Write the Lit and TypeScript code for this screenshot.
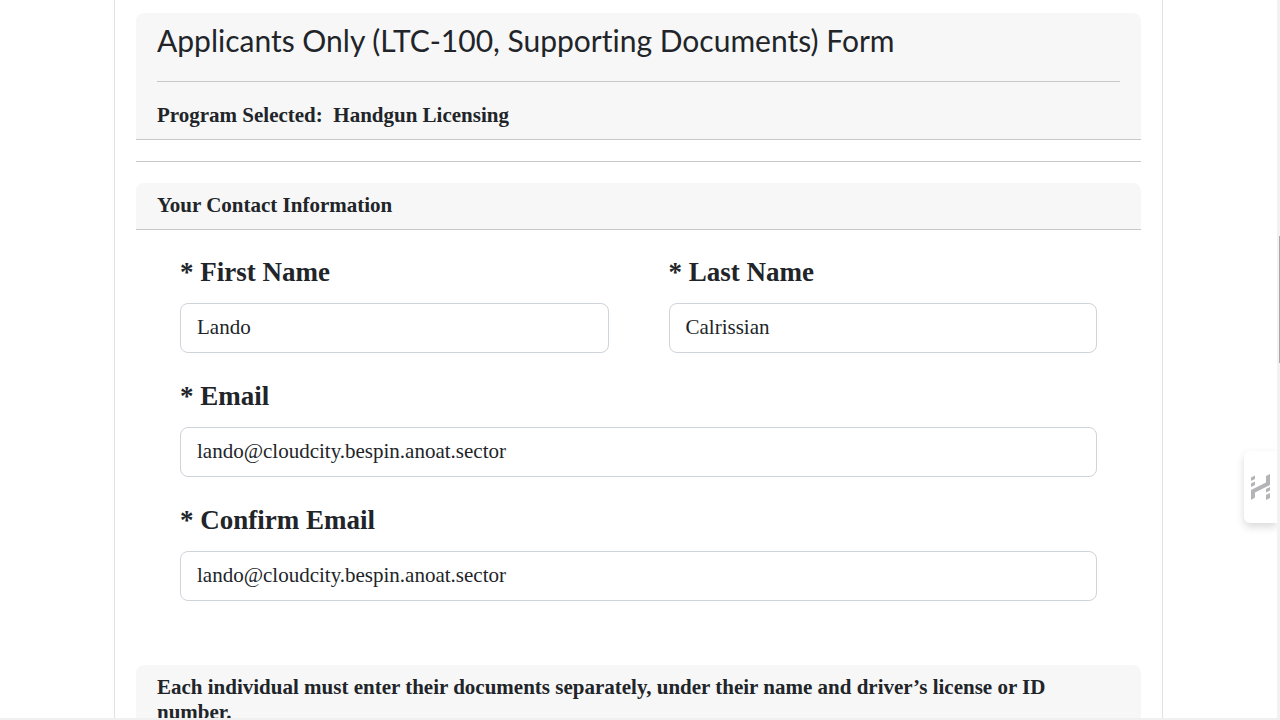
import { LitElement, html, css } from "lit";
import { customElement, property } from "lit/decorators.js";

@customElement("text-field")
class TextField extends LitElement {
  @property() label = "";
  @property() name = "";
  @property() type = "text";
  @property() value = "";

  static styles = css`
    :host {
      display: block;
      min-width: 0;
    }
    .label {
      display: block;
      margin-bottom: 14px;
      font-size: 27px;
      font-weight: 700;
      line-height: 34px;
    }
    .input {
      display: block;
      box-sizing: border-box;
      width: 100%;
      height: 50px;
      padding: 0 16px 2px;
      border: 1px solid #ced4da;
      border-radius: 8px;
      background: #fff;
      color: #212529;
      font: inherit;
      outline: none;
    }
    .input:focus-visible {
      border-color: #86b7fe;
    }
  `;

  render() {
    return html`
      <label class="label" for="control">* ${this.label}</label>
      <input class="input" id="control" name=${this.name} type=${this.type} .value=${this.value} required />
    `;
  }
}

@customElement("app-root")
class AppRoot extends LitElement {
  static styles = css`
    :host {
      display: grid;
      grid-template-columns: minmax(0, 1fr) 3px;
      grid-template-rows: minmax(0, 1fr) 2px;
      height: 100vh;
      overflow: hidden;
      background: #fff;
      color: #212529;
      font-family: "Liberation Serif", "Times New Roman", serif;
      font-size: 21px;
      line-height: 25px;
    }
    .viewport {
      position: relative;
      overflow: hidden;
    }
    .page {
      box-sizing: border-box;
      max-width: 1049px;
      min-height: 100%;
      margin: 0 auto;
      padding: 13px 21px 0;
      border: 1px solid #dee2e6;
      border-width: 0 1px;
    }
    .band {
      padding: 10px 21px 11px;
      border-bottom: 1px solid #c8c8c8;
      border-radius: 8px 8px 0 0;
      background: #f7f7f7;
    }
    .intro {
      padding-top: 8px;
    }
    .title {
      margin: 0;
      font-family: Lato, sans-serif;
      font-size: 30px;
      font-variant-ligatures: none;
      font-weight: 400;
      line-height: 39px;
    }
    .rule {
      height: 1px;
      margin: 21px 0;
      border: 0;
      background: #c8c8c8;
    }
    .heading {
      margin: 0;
      font-size: 21px;
      font-weight: 700;
      line-height: 25px;
    }
    .program {
      white-space: pre-wrap;
    }
    .fields {
      display: grid;
      grid-template-columns: repeat(2, minmax(0, 1fr));
      gap: 26px 60px;
      padding: 25px 44px 64px;
    }
    .wide {
      grid-column: 1 / -1;
    }
    .tab {
      position: absolute;
      top: 451px;
      right: 0;
      display: flex;
      align-items: center;
      justify-content: center;
      width: 33px;
      height: 72px;
      padding: 0 2px 0 0;
      border: 0;
      border-radius: 6px 0 0 6px;
      background: #fff;
      box-shadow: 0 4px 8px rgba(0, 0, 0, 0.15);
    }
    .mark {
      width: 20px;
      height: 26px;
      fill: #b4b4b8;
    }
    .track {
      display: grid;
      grid-template-rows: 236fr 127fr 355fr;
      background: #f2f2f2;
    }
    .thumb {
      grid-row: 2;
      margin-left: 2px;
      background: #a8a8a8;
    }
    .bottom {
      grid-column: 1 / -1;
      background: #f0f0f0;
    }
  `;

  render() {
    return html`
      <div class="viewport">
        <main class="page">
          <header class="band intro">
            <h1 class="title">Applicants Only (LTC-100, Supporting Documents) Form</h1>
            <hr class="rule" />
            <h2 class="heading program">Program Selected:  Handgun Licensing</h2>
          </header>
          <hr class="rule" />
          <form>
            <div class="band"><h2 class="heading">Your Contact Information</h2></div>
            <div class="fields">
              <text-field label="First Name" name="first" value="Lando"></text-field>
              <text-field label="Last Name" name="last" value="Calrissian"></text-field>
              <text-field class="wide" label="Email" name="email" type="email"
                value="lando@cloudcity.bespin.anoat.sector"></text-field>
              <text-field class="wide" label="Confirm Email" name="confirm" type="email"
                value="lando@cloudcity.bespin.anoat.sector"></text-field>
            </div>
            <div class="band">
              <h2 class="heading">
                Each individual must enter their documents separately, under their name and driver’s license or ID number.
              </h2>
            </div>
          </form>
        </main>
        <button class="tab" type="button" aria-label="Open assistant">
          <svg class="mark" viewBox="0 0 20 26" aria-hidden="true">
            <path d="M16 2 20 0V11L5 18.500V23.500L1 26V16L16 8.500Z" />
            <path d="M1 3.500 5 1.500V5L1 7ZM1 9.500 5 7.500V11L1 13ZM16 15 20 13V16.500L16 18.500ZM16 21 20 19V24L16 26Z" />
          </svg>
        </button>
      </div>
      <div class="track"><div class="thumb"></div></div>
      <div class="bottom"></div>
    `;
  }
}
